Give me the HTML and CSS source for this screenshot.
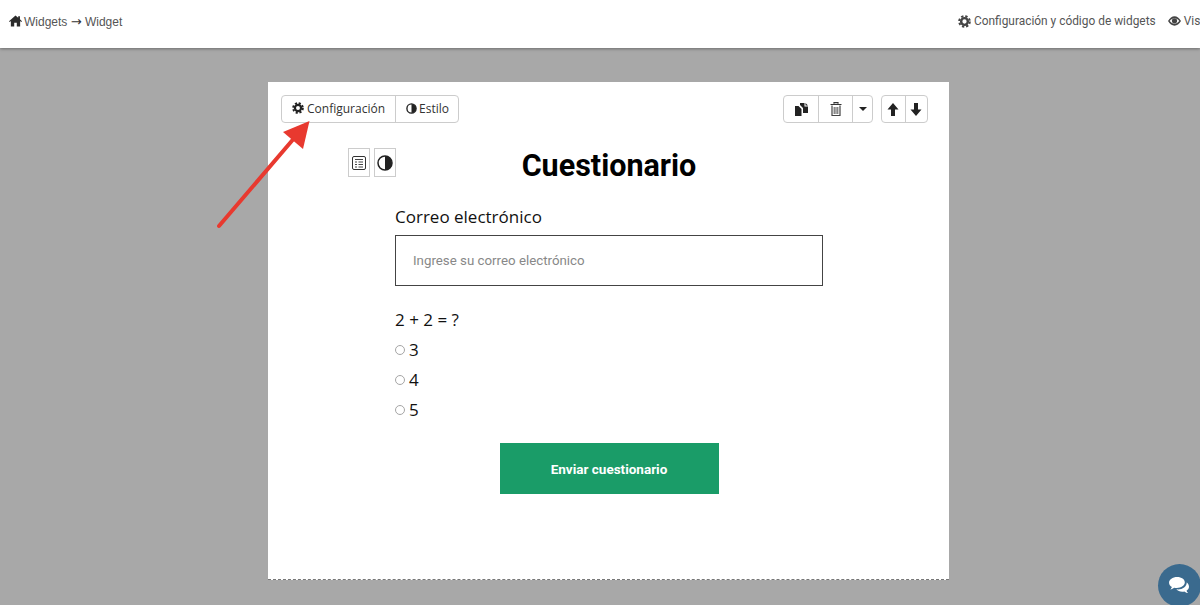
FILE: index.html
```html
<!DOCTYPE html>
<html lang="es">
<head>
    <meta charset="UTF-8">
    <title>Cuestionario</title>
    <link rel="stylesheet" href="styles.css">
</head>
<body>
    <header class="topbar">
        <div class="crumbs">
            <svg class="home-icon" viewBox="0 0 14 12" width="13" height="12"><path d="M7 0L0 6.200l.8.900L2 6.100V12h3.600V8h2.800v4H12V6.100l1.200 1 .8-.9-2.200-2V.8h-1.900v1.700z" fill="#2b2b2b"/></svg>
            <span>Widgets <span class="crumb-arrow">→</span> Widget</span>
        </div>
        <div class="top-links">
            <span class="top-link">
                <svg viewBox="0 0 14 14" width="13" height="13"><circle cx="7" cy="7" r="3.600" fill="none" stroke="#444" stroke-width="2.600"/><circle cx="7" cy="7" r="5.700" fill="none" stroke="#444" stroke-width="2.200" stroke-dasharray="2.500 2"/></svg>
                Configuración y código de widgets
            </span>
            <span class="top-link">
                <svg viewBox="0 0 14 10" width="13" height="10"><path d="M0 5c2-3.300 4.300-5 7-5s5 1.700 7 5c-2 3.300-4.300 5-7 5S2 8.300 0 5z" fill="#444"/><path d="M1.800 5C3.300 3 5 2 7 2s3.700 1 5.200 3C10.700 6.500 9 8 7 8S3.300 6.500 1.800 5z" fill="#fff"/><circle cx="7" cy="4.800" r="2.800" fill="#444"/></svg>
                Vista previa
            </span>
        </div>
    </header>

    <main class="canvas">
        <section class="card">
            <div class="toolbar">
                <div class="btn-group">
                    <button class="tool-btn">
                        <svg viewBox="0 0 14 14" width="12" height="12"><circle cx="7" cy="7" r="3.600" fill="none" stroke="#222" stroke-width="2.600"/><circle cx="7" cy="7" r="5.700" fill="none" stroke="#222" stroke-width="2.200" stroke-dasharray="2.500 2"/></svg>
                        Configuración
                    </button>
                    <button class="tool-btn">
                        <svg viewBox="0 0 12 12" width="11" height="11"><circle cx="6" cy="6" r="5" fill="#fff" stroke="#222" stroke-width="1.500"/><path d="M6 1a5 5 0 0 1 0 10z" fill="#222"/></svg>
                        Estilo
                    </button>
                </div>
                <div class="toolbar-right">
                    <div class="btn-group">
                        <button class="icon-btn wide">
                            <svg viewBox="0 0 13 13" width="13" height="13"><path d="M0 3h3.500l3 3v7H0z" fill="#222"/><path d="M5 0h4.500v3.500H13V10H8V5L5 2z" fill="#222"/><path d="M10.500 0L13 2.500h-2.500z" fill="#222"/></svg>
                        </button>
                        <button class="icon-btn wide">
                            <svg viewBox="0 0 12 14" width="12" height="14"><path d="M4 1.800V.7h4v1.100M.5 2.500h11" fill="none" stroke="#333" stroke-width="1.200"/><path d="M2 3.500v10h8v-10" fill="none" stroke="#444" stroke-width="1.200"/><path d="M4.200 5v7M6 5v7M7.800 5v7" fill="none" stroke="#555" stroke-width="1"/></svg>
                        </button>
                        <button class="icon-btn caret-btn"><span class="caret"></span></button>
                    </div>
                    <div class="btn-group">
                        <button class="icon-btn">
                            <svg viewBox="0 0 12 13" width="12" height="13"><path d="M6 0l5.500 6.500H8V13H4V6.500H.5z" fill="#222"/></svg>
                        </button>
                        <button class="icon-btn">
                            <svg viewBox="0 0 12 13" width="12" height="13"><path d="M6 13L.5 6.500H4V0h4v6.500h3.500z" fill="#222"/></svg>
                        </button>
                    </div>
                </div>
            </div>

            <div class="quiz">
                <div class="quiz-tools">
                    <span class="mini-btn">
                        <svg viewBox="0 0 14 14" width="14" height="14"><rect x=".5" y=".5" width="13" height="13" rx="1.500" fill="none" stroke="#333"/><path d="M3 3.500h8M3 6h2M6.500 6H11M3 8.500h2M6.500 8.500H11M3 11h2M6.500 11H11" stroke="#444" fill="none"/></svg>
                    </span>
                    <span class="mini-btn">
                        <svg viewBox="0 0 16 16" width="16" height="16"><circle cx="8" cy="8" r="7" fill="#fff" stroke="#222" stroke-width="1.500"/><path d="M8 1a7 7 0 0 1 0 14z" fill="#222"/></svg>
                    </span>
                </div>
                <h1 class="quiz-title">Cuestionario</h1>
                <form class="quiz-form">
                    <label class="field-label" for="correo">Correo electrónico</label>
                    <input class="text-input" id="correo" type="text" placeholder="Ingrese su correo electrónico">
                    <p class="question">2 + 2 = ?</p>
                    <label class="option"><input type="radio" name="q1"><span>3</span></label>
                    <label class="option"><input type="radio" name="q1"><span>4</span></label>
                    <label class="option"><input type="radio" name="q1"><span>5</span></label>
                    <button class="submit-btn" type="button">Enviar cuestionario</button>
                </form>
            </div>
        </section>
    </main>

    <!-- flecha sobre la captura -->
    <svg class="arrow" viewBox="0 0 1200 605" width="1200" height="605">
        <path d="M219 226L296 136" stroke="#e8392f" stroke-width="4" stroke-linecap="round" fill="none"/>
        <path d="M309.500 121L283 132L303 149z" fill="#e8392f"/>
    </svg>

    <div class="chat-bubble">
        <svg viewBox="0 0 24 20" width="23" height="19"><path d="M9.500 1C4.800 1 1 3.700 1 7c0 1.900 1.200 3.500 3 4.600-.3 1-.9 1.800-1.600 2.500 1.500-.1 3-.8 4-1.700.9.200 1.800.300 2.700.300 4.700 0 8.500-2.700 8.500-6S14.200 1 9.500 1z" fill="#fff"/><path d="M19.500 6.500c.1.200.1.400.1.600 0 3.900-4.200 7-9.100 7-.6 0-1.200 0-1.800-.1 1.300 1.500 3.600 2.500 6.200 2.500.8 0 1.500-.1 2.200-.2.900.8 2.400 1.500 3.900 1.700-.7-.7-1.300-1.600-1.600-2.500 1.700-1 2.600-2.500 2.600-4.100 0-2-1-3.700-2.500-4.900z" fill="#fff"/></svg>
    </div>
</body>
</html>
```

FILE: styles.css
```css
html, body {
    height: 100%;
}
body {
    margin: 0;
    height: 605px;
    overflow: hidden;
    background-color: #a8a8a8;
    font-family: "Open Sans", sans-serif;
    color: #111;
}
svg {
    display: block;
    flex-shrink: 0;
}

/* barra superior */
.topbar {
    display: flex;
    justify-content: space-between;
    align-items: center;
    height: 48px;
    padding: 0 0 6px 9px;
    box-sizing: border-box;
    background: #fff;
    box-shadow: 0 1px 3px rgba(0, 0, 0, 0.35);
    font-family: Roboto, sans-serif;
    font-size: 11.9px;
    color: #555;
}
.crumbs {
    display: flex;
    align-items: center;
    gap: 2px;
    font-family: "Liberation Sans", sans-serif;
    font-size: 12px;
}
.crumb-arrow {
    font-family: "DejaVu Sans", sans-serif;
    font-size: 13px;
    color: #333;
}
.top-links {
    display: flex;
    gap: 12px;
    width: 242px;
    overflow: hidden;
    white-space: nowrap;
}
.top-link {
    display: flex;
    align-items: center;
    gap: 3px;
    flex-shrink: 0;
}

/* tarjeta */
.canvas {
    display: flex;
    justify-content: center;
    padding: 34px 0 0 17px;
}
.card {
    width: 681px;
    height: 498px;
    box-sizing: border-box;
    background: #fff;
    border-bottom: 1px dashed #777;
    padding: 13px 21px 0 13px;
}
.toolbar {
    display: flex;
    justify-content: space-between;
}
.toolbar-right {
    display: flex;
    gap: 8px;
}
.btn-group {
    display: flex;
    height: 28px;
    box-sizing: border-box;
    border: 1px solid #ccc;
    border-radius: 4px;
}
.btn-group button {
    display: flex;
    align-items: center;
    justify-content: center;
    gap: 3px;
    height: 100%;
    margin: 0;
    padding: 0 10px 2px;
    border: none;
    border-left: 1px solid #ccc;
    background: none;
    font-family: "Open Sans", sans-serif;
    font-size: 12px;
    color: #333;
}
.btn-group button:first-child {
    border-left: none;
}
.btn-group .tool-btn + .tool-btn {
    gap: 2px;
    padding-right: 9px;
}
.btn-group .icon-btn {
    width: 22.5px;
    padding: 0;
}
.btn-group .wide {
    width: 34px;
}
.btn-group .caret-btn {
    width: 20px;
}
.caret {
    width: 0;
    height: 0;
    border-left: 4px solid transparent;
    border-right: 4px solid transparent;
    border-top: 4px solid #222;
}

/* cuestionario */
.quiz {
    position: relative;
    display: flex;
    flex-direction: column;
    align-items: center;
    margin-right: -9px;
}
.quiz-tools {
    position: absolute;
    top: 25px;
    left: 67px;
    display: flex;
    gap: 4px;
}
.mini-btn {
    display: flex;
    align-items: center;
    justify-content: center;
    width: 20px;
    height: 27px;
    border: 1px solid #ccc;
}
.quiz-title {
    margin: 26px 0 0;
    font-family: Roboto, sans-serif;
    font-size: 30.5px;
    line-height: 34px;
    font-weight: 700;
    color: #000;
}
.quiz-form {
    display: flex;
    flex-direction: column;
    width: 428px;
    margin-top: 22px;
}
.field-label {
    font-size: 17px;
    line-height: 23px;
    margin-bottom: 7px;
}
.text-input {
    height: 51px;
    box-sizing: border-box;
    padding: 0 17px;
    border: 1px solid #444;
    border-radius: 0;
    outline: none;
    font-family: Roboto, sans-serif;
    font-size: 13.3px;
}
.text-input::placeholder {
    color: #888;
}
.question {
    margin: 22px 0 3px;
    font-size: 17px;
    line-height: 23px;
}
.option {
    display: flex;
    align-items: center;
    height: 30px;
    font-size: 17px;
}
.option input {
    width: 10px;
    height: 10px;
    margin: 1px 4px 0 0;
    opacity: 0.65;
}
.submit-btn {
    align-self: center;
    width: 219px;
    height: 51px;
    margin-top: 19px;
    border: none;
    background: #1a9c68;
    color: #fff;
    font-family: Roboto, sans-serif;
    font-size: 13.5px;
    font-weight: 700;
}

/* elementos flotantes */
.arrow {
    position: absolute;
    top: 0;
    left: 0;
    pointer-events: none;
}
.chat-bubble {
    position: absolute;
    left: 1158px;
    top: 564px;
    display: flex;
    align-items: center;
    justify-content: center;
    width: 43px;
    height: 43px;
    border-radius: 50%;
    background: #3a6a8e;
}
```
